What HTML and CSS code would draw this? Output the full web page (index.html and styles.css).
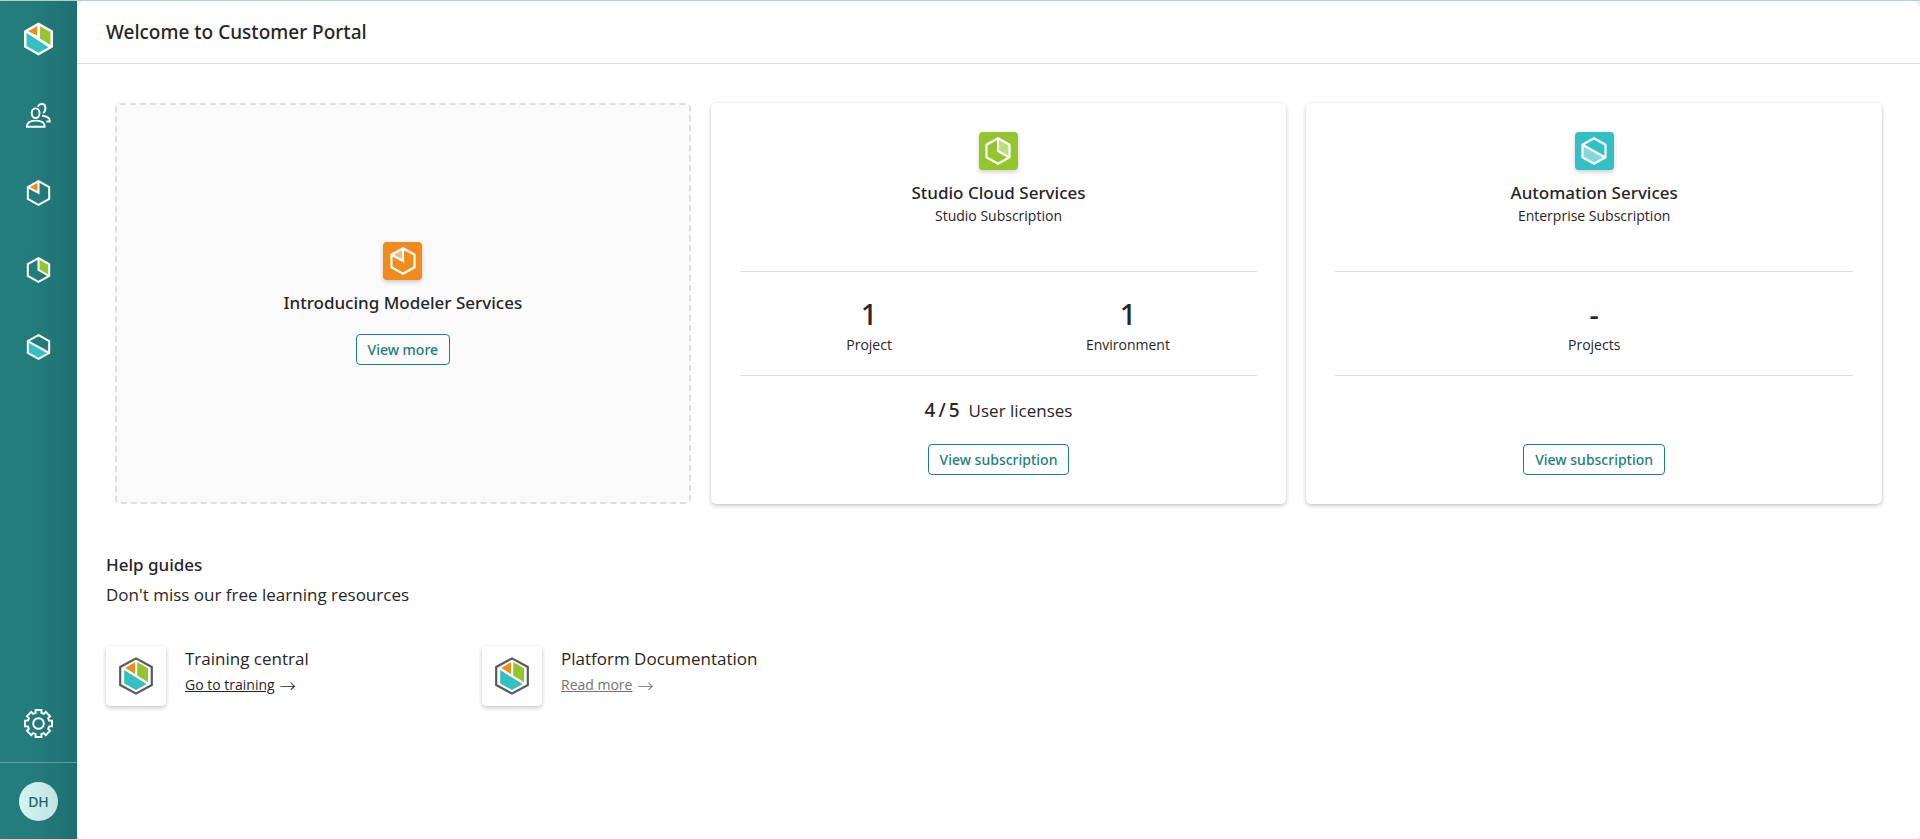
FILE: index.html
```html
<!DOCTYPE html>
<html lang="en">
<head>
<meta charset="utf-8">
<title>Customer Portal</title>
<link rel="stylesheet" href="styles.css">
</head>
<body>
<svg class="sprite" aria-hidden="true">
  <symbol id="hex-modeler" viewBox="0 0 24 26">
    <path class="facet" d="M12 1.6V13L1.6 7.2z"/>
    <path class="outline" d="M12 1.2 22.7 7.2v11.6L12 24.8 1.3 18.8V7.2zM12 1.2V12.9L1.3 7.2"/>
  </symbol>
  <symbol id="hex-studio" viewBox="0 0 24 26">
    <path class="facet" d="M12 1.6 22.4 7.4v11.2L12 13z"/>
    <path class="outline" d="M12 1.2 22.7 7.2v11.6L12 24.8 1.3 18.8V7.2zM12 1.2V13L22.7 19"/>
  </symbol>
  <symbol id="hex-automation" viewBox="0 0 24 26">
    <path class="facet" d="M1.6 7.6 22.4 19 12 24.6 1.6 18.6z"/>
    <path class="outline" d="M12 1.2 22.7 7.2v11.6L12 24.8 1.3 18.8V7.2zM1.3 7.2 22.7 19"/>
  </symbol>
  <symbol id="hex-doc" viewBox="0 0 34 38">
    <path fill="#fff" stroke="#595959" stroke-width="2.2" d="M17 1.4 32.8 10v18L17 36.6 1.2 28V10z"/>
    <path fill="#f08c1e" d="M16 5.2V17L6.4 11z"/>
    <path fill="#94c52c" d="M18.2 5.2 29 11.2v14L18.2 18.6z"/>
    <path fill="#34bfc2" d="M5.2 13 27.6 27 17 33 5.2 26.4z"/>
  </symbol>
</svg>

<div class="app">
  <nav class="sidebar" aria-label="Main">
    <a class="nav-item nav-logo" href="#" aria-label="Home">
      <svg width="29" height="34" viewBox="0 0 30 34">
        <path fill="#fff" d="M15 0 30 8.4v17.2L15 34 0 25.6V8.4z"/>
        <path fill="#f08c1e" d="M13.6 3.8v9.6L4.2 9z"/>
        <path fill="#94c52c" d="M16.6 3.8 27.4 9.8V23.2L16.6 16.4z"/>
        <path fill="#34bfc2" d="M2.6 10.8 25.4 25.6 15 31.2 2.6 24.2z"/>
      </svg>
    </a>
    <a class="nav-item" href="#" aria-label="Users">
      <svg class="line" width="25" height="25" viewBox="0 0 26 26">
        <path d="M6 11.2V9.8a4 4.2 0 0 1 8 0v1.400a4 4.400 0 0 1-8 0zM1 24c.2-3.600 4-5.700 9.200-5.700 5.300 0 9 2.100 9.200 5.700v.7H1zM12.200 3.600C13.300 1.800 14.800 1 16.300 1 18.700 1 20.200 2.800 20.200 5.200c0 2.600-.8 4.300-2.700 5M16.700 13.200c4.500.5 8 2.600 8 5.300v.8h-3.500"/>
      </svg>
    </a>
    <a class="nav-item modeler" href="#" aria-label="Modeler Services"><svg width="25" height="26"><use href="#hex-modeler"/></svg></a>
    <a class="nav-item studio" href="#" aria-label="Studio Cloud Services"><svg width="25" height="26"><use href="#hex-studio"/></svg></a>
    <a class="nav-item automation" href="#" aria-label="Automation Services"><svg width="25" height="26"><use href="#hex-automation"/></svg></a>
    <a class="nav-item nav-settings" href="#" aria-label="Settings">
      <svg class="line" width="29" height="29" viewBox="0 0 30 30">
        <path d="M12 1h6v3l2.500 1 2-2 4.500 4.500-2 2L26 12h3v6h-3l-1 2.500 2 2-4.500 4.500-2-2L18 26v3h-6v-3l-2.500-1-2 2L3 22.500l2-2L4 18H1v-6h3l1-2.500-2-2L7.500 3l2 2L12 4z"/>
        <circle cx="15" cy="15" r="5.500"/>
      </svg>
    </a>
    <div class="account"><button class="avatar" type="button" aria-label="Account">DH</button></div>
  </nav>

  <div class="page">
    <header class="page-header"><h1>Welcome to Customer Portal</h1></header>
    <main>
      <section class="cards" aria-label="Services">
        <article class="card card-intro modeler">
          <span class="badge"><svg width="26" height="28"><use href="#hex-modeler"/></svg></span>
          <h2>Introducing Modeler Services</h2>
          <button class="btn" type="button">View more</button>
        </article>

        <article class="card card-service studio">
          <div class="card-head">
            <span class="badge"><svg width="26" height="28"><use href="#hex-studio"/></svg></span>
            <h2>Studio Cloud Services</h2>
            <p>Studio Subscription</p>
          </div>
          <div class="stats">
            <div class="stat"><strong>1</strong><span>Project</span></div>
            <div class="stat"><strong>1</strong><span>Environment</span></div>
          </div>
          <div class="card-foot">
            <p class="licenses"><strong><span>4</span><span>/</span><span>5</span></strong><span>User licenses</span></p>
            <button class="btn" type="button">View subscription</button>
          </div>
        </article>

        <article class="card card-service automation">
          <div class="card-head">
            <span class="badge"><svg width="26" height="28"><use href="#hex-automation"/></svg></span>
            <h2>Automation Services</h2>
            <p>Enterprise Subscription</p>
          </div>
          <div class="stats">
            <div class="stat"><strong>-</strong><span>Projects</span></div>
          </div>
          <div class="card-foot">
            <button class="btn" type="button">View subscription</button>
          </div>
        </article>
      </section>

      <section class="help">
        <h2>Help guides</h2>
        <p class="help-lead">Don't miss our free learning resources</p>
        <div class="guides">
          <div class="guide">
            <span class="tile"><svg width="34" height="38"><use href="#hex-doc"/></svg></span>
            <div class="guide-text">
              <h3>Training central</h3>
              <p class="guide-link"><a href="#">Go to training</a><span class="arrow">→</span></p>
            </div>
          </div>
          <div class="guide">
            <span class="tile"><svg width="34" height="38"><use href="#hex-doc"/></svg></span>
            <div class="guide-text">
              <h3>Platform Documentation</h3>
              <p class="guide-link muted"><a href="#">Read more</a><span class="arrow">→</span></p>
            </div>
          </div>
        </div>
      </section>
    </main>
  </div>
</div>
</body>
</html>
```
FILE: styles.css
```css
* { box-sizing: border-box; }

body {
  margin: 0;
  color: #262626;
  background: #e9edf0;
  font-family: "Open Sans", "Noto Sans", sans-serif;
  font-size: 17px;
  line-height: 24px;
}

h1, h2, h3, p { margin: 0; }
a { color: inherit; }
svg { display: block; }

.sprite { position: absolute; width: 0; height: 0; }

.app {
  display: flex;
  min-height: 100vh;
  border-top: 1px solid #b1cfd3;
}

/* Sidebar */
.sidebar {
  display: flex;
  flex-direction: column;
  flex: none;
  width: 77px;
  background: linear-gradient(90deg, #237e7e 0%, #237c7c 45%, #1f6f70 100%);
}

.nav-item {
  display: flex;
  align-items: center;
  justify-content: center;
  height: 77px;
}
.nav-logo { height: 76px; }
.nav-settings { margin-top: auto; }

.line { fill: none; stroke: #fff; stroke-width: 2; }
.outline { fill: none; stroke: #fff; stroke-width: 2; }
.facet { fill: var(--facet); }
.nav-item.modeler { --facet: #f08c1e; }
.nav-item.studio { --facet: #94c52c; }
.nav-item.automation { --facet: #34bfc2; }

.account {
  display: flex;
  align-items: center;
  justify-content: center;
  height: 77px;
  border-top: 1px solid #5f9fa0;
}
.avatar {
  width: 39px;
  height: 39px;
  padding: 0;
  border: 0;
  border-radius: 50%;
  color: #1f6465;
  background: linear-gradient(90deg, #d3f2f2, #c4e4e4);
  font: 500 14px/39px "Noto Sans", sans-serif;
}

/* Page */
.page {
  flex: 1;
  min-width: 0;
  background: #fff;
  border-radius: 8px 8px 5px 5px;
}
.page-header {
  padding: 17px 29px 16px;
  border-bottom: 1px solid #dedede;
}
h1, h2, .stat strong, .licenses strong { font-family: "Noto Sans", sans-serif; font-weight: 500; }
h1 { font-size: 19px; line-height: 29px; }
h2 { font-size: 17px; line-height: 24px; }
h3 { font-size: 17px; font-weight: 400; line-height: 24px; }

/* Cards */
.cards {
  display: grid;
  grid-template-columns: repeat(3, minmax(0, 1fr));
  gap: 20px;
  padding: 39px 38px 0;
}
.card {
  display: flex;
  flex-direction: column;
  align-items: center;
  min-height: 401px;
  border-radius: 5px;
  text-align: center;
}
.card-intro {
  justify-content: center;
  border: 2px dashed #dedede;
  background: #fafafa;
}
.card-intro .btn { margin-top: 19px; }
.card-service {
  padding: 29px;
  box-shadow: 0 2px 4px rgba(0, 0, 0, .2), 0 0 2px rgba(0, 0, 0, .08);
}

.badge {
  --facet: rgba(255, 255, 255, .4);
  display: flex;
  align-items: center;
  justify-content: center;
  width: 39px;
  height: 38px;
  margin: 0 auto 11px;
  border-radius: 4px;
  box-shadow: 0 2px 4px rgba(0, 0, 0, .2);
}
.modeler .badge { background: #f08c1e; }
.studio .badge { background: #94c52c; }
.automation .badge { background: #34bfc2; }

.card-head { height: 139px; }
.card-head p { font-size: 14px; line-height: 22px; }

.stats {
  display: flex;
  width: 100%;
  padding: 22px 0 18px;
  border: solid #dedede;
  border-width: 1px 0;
}
.stat {
  display: flex;
  flex: 1;
  flex-direction: column;
  font-size: 14px;
  line-height: 24px;
}
.stat strong { font-size: 29px; line-height: 39px; }

.card-foot {
  display: flex;
  flex: 1;
  flex-direction: column;
  align-items: center;
  justify-content: flex-end;
}
.licenses { display: flex; align-items: baseline; gap: 9px; margin-bottom: 21px; }
.licenses strong { display: flex; gap: 3px; font-size: 19px; }

.btn {
  height: 31px;
  padding: 0 11px;
  border: 1px solid #237e7e;
  border-radius: 4px;
  color: #237e7e;
  background: transparent;
  font: 500 14px/29px "Noto Sans", sans-serif;
}

/* Help guides */
.help { padding: 49px 29px 0; }
.help-lead { margin-top: 6px; }
.guides { display: flex; margin-top: 39px; }
.guide { display: flex; flex: none; gap: 19px; width: 376px; }
.guide-text { padding-top: 1px; }
.tile {
  display: flex;
  align-items: center;
  justify-content: center;
  width: 60px;
  height: 60px;
  border-radius: 4px;
  box-shadow: 0 2px 4px rgba(0, 0, 0, .2), 0 0 2px rgba(0, 0, 0, .08);
}
.guide-link { display: flex; align-items: center; gap: 5px; font-size: 14px; line-height: 28px; }
.arrow { font-family: "Noto Sans CJK JP", sans-serif; font-size: 16px; font-weight: 300; }
.muted { color: #737373; }
```
